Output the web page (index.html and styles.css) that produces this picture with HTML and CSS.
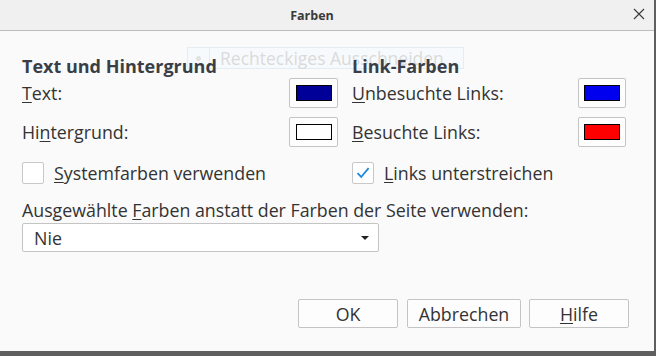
FILE: index.html
```html
<!DOCTYPE html>
<html lang="de">
<head>
<meta charset="utf-8">
<title>Farben</title>
<link rel="stylesheet" href="styles.css">
</head>
<body>
<div class="window">
  <div class="snip-hint">
    <span class="snip-icon"><span class="snip-dot"></span></span>
    <span class="snip-text">Rechteckiges Ausschneiden</span>
  </div>
  <header class="titlebar">
    <span class="title">Farben</span>
    <span class="close">
      <svg width="12" height="12" viewBox="0 0 12 12"><path d="M1 1 L11 11 M11 1 L1 11" stroke="#3a3a3a" stroke-width="1.1" fill="none"/></svg>
    </span>
  </header>
  <main class="content">
    <div class="columns">
      <section class="col col-left">
        <h2 class="heading">Text und Hintergrund</h2>
        <div class="row">
          <span class="label"><u>T</u>ext:</span>
          <span class="swatch-btn"><span class="swatch swatch-text"></span></span>
        </div>
        <div class="row">
          <span class="label">Hi<u>n</u>tergrund:</span>
          <span class="swatch-btn"><span class="swatch swatch-bg"></span></span>
        </div>
        <div class="check">
          <span class="box"></span>
          <span class="label"><u>S</u>ystemfarben verwenden</span>
        </div>
      </section>
      <section class="col col-right">
        <h2 class="heading">Link-Farben</h2>
        <div class="row">
          <span class="label"><u>U</u>nbesuchte Links:</span>
          <span class="swatch-btn"><span class="swatch swatch-link"></span></span>
        </div>
        <div class="row">
          <span class="label"><u>B</u>esuchte Links:</span>
          <span class="swatch-btn"><span class="swatch swatch-visited"></span></span>
        </div>
        <div class="check">
          <span class="box box-checked">
            <svg width="14" height="14" viewBox="0 0 14 14"><path d="M1.5 7.2 L5.2 11 L12.6 2.2" stroke="#1f88d9" stroke-width="1.8" fill="none"/></svg>
          </span>
          <span class="label"><u>L</u>inks unterstreichen</span>
        </div>
      </section>
    </div>
    <div class="select-label">Ausgewählte <u>F</u>arben anstatt der Farben der Seite verwenden:</div>
    <div class="select">
      <span class="select-value">Nie</span>
      <span class="arrow"></span>
    </div>
  </main>
  <footer class="actions">
    <span class="btn btn-ok">OK</span>
    <span class="btn btn-cancel">Abbrechen</span>
    <span class="btn btn-help"><u>H</u>ilfe</span>
  </footer>
</div>
</body>
</html>
```
FILE: styles.css
```css
* { box-sizing: border-box; }
html, body { margin: 0; padding: 0; }
body {
  background: #5f5f5f;
  width: 656px;
  height: 356px;
  overflow: hidden;
  font-family: "Open Sans", "Noto Sans", sans-serif;
  color: #333;
}
u { text-decoration: underline; text-underline-offset: 2px; text-decoration-thickness: 1px; }
.window {
  position: relative;
  z-index: 0;
  width: 654px;
  height: 351px;
  background: #fafafa;
  display: flex;
  flex-direction: column;
}
.titlebar {
  height: 31px;
  background: #f0f0f0;
  border-bottom: 1px solid #bdbdbd;
  display: flex;
  align-items: center;
  justify-content: center;
  padding-right: 30px;
  position: relative;
}
.title { font-weight: 700; font-size: 12.5px; color: #3a3a3a; }
.close {
  position: absolute;
  right: 9px;
  top: 8px;
  width: 12px;
  height: 12px;
  display: flex;
}
.content {
  padding: 25px 0 0 22px;
  font-size: 17.8px;
}
.columns {
  display: grid;
  grid-template-columns: 316px 274px;
  column-gap: 14px;
}
.col { display: flex; flex-direction: column; }
.heading {
  margin: 0;
  height: 22px;
  line-height: 20px;
  font-size: 18px;
  font-weight: 700;
  color: #3a3f47;
}
.row {
  height: 30px;
  display: flex;
  align-items: center;
  justify-content: space-between;
  margin-bottom: 9px;
}
.row + .row { margin-bottom: 14px; }
.label { line-height: 20px; }
.swatch-btn {
  width: 49px;
  height: 30px;
  border: 1px solid #c4c4c4;
  border-radius: 2px;
  background: #fdfdfd;
  display: flex;
  align-items: center;
  justify-content: center;
}
.col-right .swatch-btn { width: 48px; }
.swatch {
  width: 36px;
  height: 16px;
  border: 1px solid #000;
}
.swatch-text { background: #000099; }
.swatch-bg { background: #ffffff; }
.swatch-link { background: #0000ee; }
.swatch-visited { background: #ff0000; }
.check {
  height: 23px;
  display: flex;
  align-items: center;
  gap: 10px;
}
.box {
  width: 22px;
  height: 22px;
  border: 1px solid #c8c8c8;
  border-radius: 2px;
  background: #fff;
  display: flex;
  align-items: center;
  justify-content: center;
}
.select-label {
  margin-top: 15px;
  line-height: 22px;
  height: 24px;
}
.select {
  width: 357px;
  height: 29px;
  border: 1px solid #c4c4c4;
  border-radius: 2px;
  background: #fff;
  display: flex;
  align-items: center;
  justify-content: space-between;
  padding: 0 9px 0 11px;
}
.arrow {
  width: 0;
  height: 0;
  border-left: 4px solid transparent;
  border-right: 4px solid transparent;
  border-top: 4px solid #222;
}
.actions {
  margin-top: auto;
  display: flex;
  justify-content: flex-end;
  gap: 8px;
  padding: 0 25px 23px 0;
  font-size: 17.8px;
}
.btn {
  height: 29px;
  width: 100px;
  border: 1px solid #c4c4c4;
  border-radius: 2px;
  background: #fdfdfd;
  display: flex;
  align-items: center;
  justify-content: center;
}
.btn-cancel { width: 114px; margin-left: 1px; }
.snip-hint {
  position: absolute;
  z-index: -1;
  left: 187px;
  top: 47px;
  width: 277px;
  height: 22px;
  border: 1px solid #e3edf6;
  background: #f7fafd;
  display: flex;
  align-items: center;
  font-size: 17.5px;
}
.snip-icon {
  width: 22px;
  height: 20px;
  border-right: 1px solid #e3edf6;
  display: flex;
  align-items: center;
  justify-content: center;
}
.snip-dot { width: 5px; height: 5px; border-radius: 50%; background: #e2e2e2; }
.snip-text { color: #dadada; padding-left: 10px; white-space: nowrap; overflow: hidden; }
```
